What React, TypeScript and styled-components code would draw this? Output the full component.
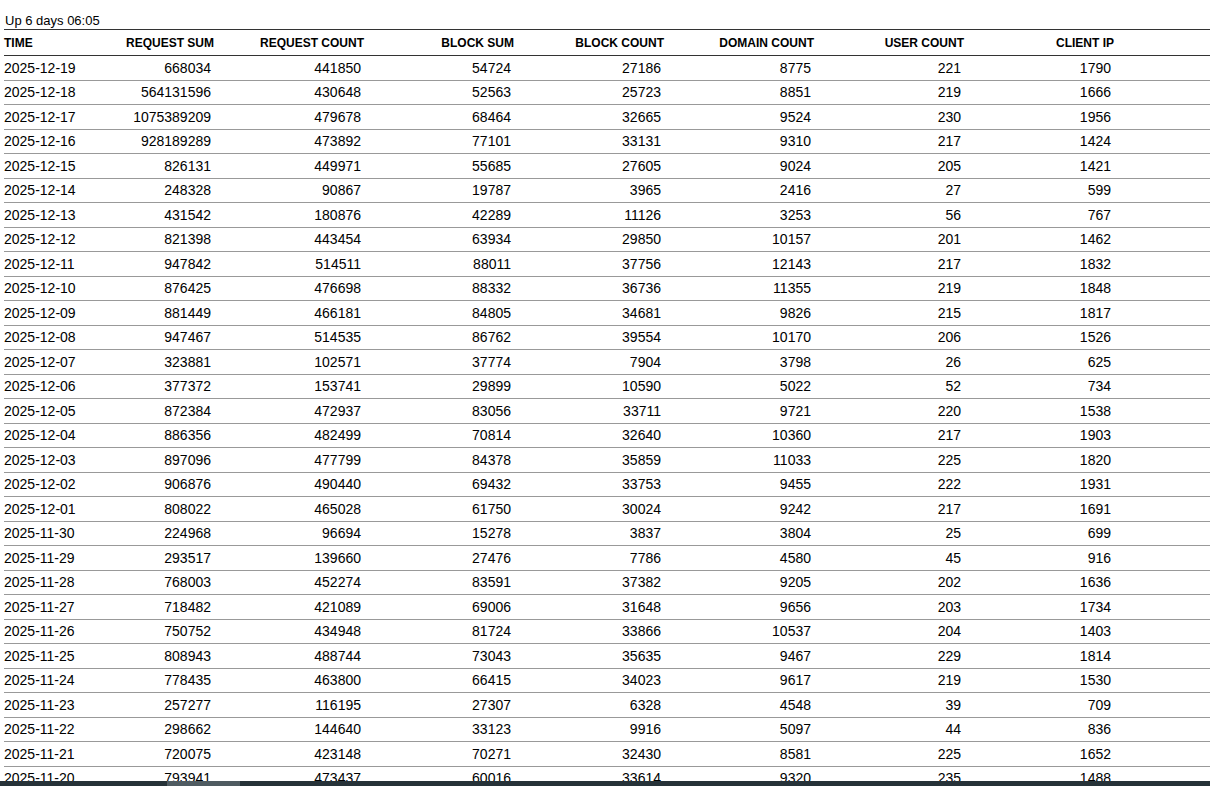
import styled, { createGlobalStyle } from "styled-components";

const GlobalStyle = createGlobalStyle`
  html, body { margin: 0; padding: 0; background: #fff; overflow: hidden; }
  body { font-family: "Liberation Sans", Arial, sans-serif; color: #000; }
`;

const Page = styled.div`
  padding: 12px 0 0 4px;
  height: 786px;
  box-sizing: border-box;
`;

const Uptime = styled.div`
  font-size: 13px;
  line-height: 17px;
  padding-left: 1px;
`;

const Row = styled.div<{ $head?: boolean }>`
  display: grid;
  grid-template-columns: 60px repeat(7, 150px) 1fr;
  height: ${(p) => (p.$head ? "27px" : "24.5px")};
  align-items: center;
  box-sizing: border-box;
  border-top: ${(p) => (p.$head ? "1px solid #333" : "none")};
  border-bottom: 1px solid ${(p) => (p.$head ? "#333" : "#999")};
  font-size: ${(p) => (p.$head ? "12px" : "14px")};
  font-weight: ${(p) => (p.$head ? "bold" : "normal")};
`;

const Cell = styled.div<{ $left?: boolean; $head?: boolean }>`
  text-align: ${(p) => (p.$left ? "left" : "right")};
  padding-right: ${(p) => (p.$left ? "0" : p.$head ? "0" : "3px")};
  white-space: nowrap;
`;

const ScrollBar = styled.div`
  position: fixed;
  left: 0;
  right: 0;
  bottom: 0;
  height: 5px;
  background: #263238;
`;

const Thumb = styled.div`
  position: absolute;
  left: 167px;
  width: 73px;
  top: 0;
  bottom: 0;
  background: #4f5b61;
`;

const headers = ["TIME", "REQUEST SUM", "REQUEST COUNT", "BLOCK SUM", "BLOCK COUNT", "DOMAIN COUNT", "USER COUNT", "CLIENT IP"];

const data = `2025-12-19 668034 441850 54724 27186 8775 221 1790
2025-12-18 564131596 430648 52563 25723 8851 219 1666
2025-12-17 1075389209 479678 68464 32665 9524 230 1956
2025-12-16 928189289 473892 77101 33131 9310 217 1424
2025-12-15 826131 449971 55685 27605 9024 205 1421
2025-12-14 248328 90867 19787 3965 2416 27 599
2025-12-13 431542 180876 42289 11126 3253 56 767
2025-12-12 821398 443454 63934 29850 10157 201 1462
2025-12-11 947842 514511 88011 37756 12143 217 1832
2025-12-10 876425 476698 88332 36736 11355 219 1848
2025-12-09 881449 466181 84805 34681 9826 215 1817
2025-12-08 947467 514535 86762 39554 10170 206 1526
2025-12-07 323881 102571 37774 7904 3798 26 625
2025-12-06 377372 153741 29899 10590 5022 52 734
2025-12-05 872384 472937 83056 33711 9721 220 1538
2025-12-04 886356 482499 70814 32640 10360 217 1903
2025-12-03 897096 477799 84378 35859 11033 225 1820
2025-12-02 906876 490440 69432 33753 9455 222 1931
2025-12-01 808022 465028 61750 30024 9242 217 1691
2025-11-30 224968 96694 15278 3837 3804 25 699
2025-11-29 293517 139660 27476 7786 4580 45 916
2025-11-28 768003 452274 83591 37382 9205 202 1636
2025-11-27 718482 421089 69006 31648 9656 203 1734
2025-11-26 750752 434948 81724 33866 10537 204 1403
2025-11-25 808943 488744 73043 35635 9467 229 1814
2025-11-24 778435 463800 66415 34023 9617 219 1530
2025-11-23 257277 116195 27307 6328 4548 39 709
2025-11-22 298662 144640 33123 9916 5097 44 836
2025-11-21 720075 423148 70271 32430 8581 225 1652
2025-11-20 793941 473437 60016 33614 9320 235 1488`
  .split("\n")
  .map((l) => l.split(" "));

export default function App() {
  return (
    <Page>
      <GlobalStyle />
      <Uptime>Up 6 days 06:05</Uptime>
      <Row $head>
        {headers.map((h, i) => (
          <Cell key={h} $left={i === 0} $head>
            {h}
          </Cell>
        ))}
        <Cell />
      </Row>
      {data.map((r) => (
        <Row key={r[0]}>
          {r.map((v, i) => (
            <Cell key={i} $left={i === 0}>
              {v}
            </Cell>
          ))}
          <Cell />
        </Row>
      ))}
      <ScrollBar>
        <Thumb />
      </ScrollBar>
    </Page>
  );
}
